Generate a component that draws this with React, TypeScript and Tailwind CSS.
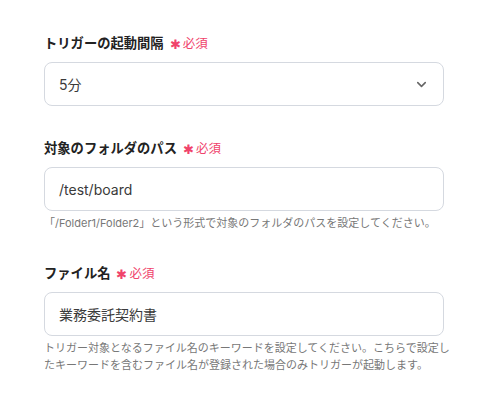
import { ChevronDown } from 'lucide-react';

const font = { fontFamily: 'Inter, "Noto Sans CJK JP", sans-serif' };

function Label({ text }: { text: string }) {
  return (
    <div className="flex items-center h-5">
      <span className="text-[13.3px] font-bold text-[#222]">{text}</span>
      <span className="ml-[6px] text-[13px] leading-none text-[#f0436b]">✱</span>
      <span className="ml-[2px] text-[12.5px] text-[#f0436b]">必須</span>
    </div>
  );
}

function Box({ value, select }: { value: string; select?: boolean }) {
  return (
    <div className="mt-2 h-[44px] w-[400px] rounded-lg border border-[#d5d9e0] bg-white flex items-center justify-between pl-[14px] pr-[14px]">
      <span className="text-[14px] text-[#3a3a3a]">{value}</span>
      {select && <ChevronDown className="w-[15px] h-[15px] text-[#666]" strokeWidth={2.5} />}
    </div>
  );
}

function Help({ children }: { children: React.ReactNode }) {
  return <p className="mt-1 w-[410px] text-[11px] leading-[17px] text-[#777]">{children}</p>;
}

export default function App() {
  return (
    <div className="w-[503px] h-[408px] bg-white pl-[44px] pt-[34px]" style={font}>
      <Label text="トリガーの起動間隔" />
      <Box value="5分" select />

      <div className="mt-[33px]">
        <Label text="対象のフォルダのパス" />
        <Box value="/test/board" />
        <Help>「/Folder1/Folder2」という形式で対象のフォルダのパスを設定してください。</Help>
      </div>

      <div className="mt-[32px]">
        <Label text="ファイル名" />
        <Box value="業務委託契約書" />
        <Help>
          トリガー対象となるファイル名のキーワードを設定してください。こちらで設定したキーワードを含むファイル名が登録された場合のみトリガーが起動します。
        </Help>
      </div>
    </div>
  );
}
